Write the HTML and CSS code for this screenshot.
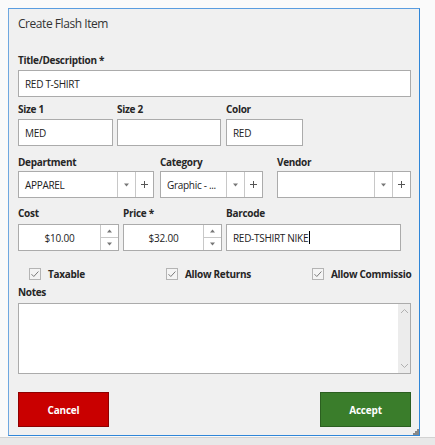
FILE: index.html
```html
<!DOCTYPE html>
<html>
<head>
<meta charset="utf-8">
<link rel="stylesheet" href="styles.css">
</head>
<body>
<div class="window">
  <div class="title">Create Flash Item</div>

  <div class="lbl mt-first">Title/Description *</div>
  <div class="input h27 mt3 full"><span class="val">RED T-SHIRT</span></div>

  <div class="row mt5">
    <div class="field w-size1"><div class="lbl">Size 1</div><div class="input h27 mt3"><span class="val">MED</span></div></div>
    <div class="field w-size2 ml4"><div class="lbl">Size 2</div><div class="input h27 mt3"></div></div>
    <div class="field w-color ml5"><div class="lbl">Color</div><div class="input h27 mt3"><span class="val">RED</span></div></div>
  </div>

  <div class="row mt9">
    <div class="field w-dept">
      <div class="lbl">Department</div>
      <div class="combo mt2">
        <span class="ctext">APPAREL</span>
        <span class="cbtn"><svg width="7" height="4" viewBox="0 0 7 4"><path d="M1 0.5h5L3.5 3.5z" fill="#777"/></svg></span>
        <span class="cbtn"><svg width="9" height="9" viewBox="0 0 9 9"><path d="M4.5 1v7M1 4.5h7" stroke="#555" stroke-width="1"/></svg></span>
      </div>
    </div>
    <div class="field w-cat ml6">
      <div class="lbl">Category</div>
      <div class="combo mt2">
        <span class="ctext">Graphic - ...</span>
        <span class="cbtn"><svg width="7" height="4" viewBox="0 0 7 4"><path d="M1 0.5h5L3.5 3.5z" fill="#777"/></svg></span>
        <span class="cbtn"><svg width="9" height="9" viewBox="0 0 9 9"><path d="M4.5 1v7M1 4.5h7" stroke="#555" stroke-width="1"/></svg></span>
      </div>
    </div>
    <div class="field w-vendor ml14">
      <div class="lbl">Vendor</div>
      <div class="combo mt2">
        <span class="ctext"></span>
        <span class="cbtn"><svg width="7" height="4" viewBox="0 0 7 4"><path d="M1 0.5h5L3.5 3.5z" fill="#777"/></svg></span>
        <span class="cbtn"><svg width="9" height="9" viewBox="0 0 9 9"><path d="M4.5 1v7M1 4.5h7" stroke="#555" stroke-width="1"/></svg></span>
      </div>
    </div>
  </div>

  <div class="row mt8">
    <div class="field w-cost">
      <div class="lbl">Cost</div>
      <div class="spin mt4">
        <span class="stext">$10.00</span>
        <span class="sbtns">
          <span class="sb"><svg width="7" height="4" viewBox="0 0 7 4"><path d="M1 3.5h5L3.5 0.5z" fill="#777"/></svg></span>
          <span class="sb sb2"><svg width="7" height="4" viewBox="0 0 7 4"><path d="M1 0.5h5L3.5 3.5z" fill="#777"/></svg></span>
        </span>
      </div>
    </div>
    <div class="field w-price ml4">
      <div class="lbl">Price *</div>
      <div class="spin mt4">
        <span class="stext">$32.00</span>
        <span class="sbtns">
          <span class="sb"><svg width="7" height="4" viewBox="0 0 7 4"><path d="M1 3.5h5L3.5 0.5z" fill="#777"/></svg></span>
          <span class="sb sb2"><svg width="7" height="4" viewBox="0 0 7 4"><path d="M1 0.5h5L3.5 3.5z" fill="#777"/></svg></span>
        </span>
      </div>
    </div>
    <div class="field w-barcode ml4">
      <div class="lbl">Barcode</div>
      <div class="input h27 mt4"><span class="val">RED-TSHIRT NIKE</span><span class="caret"></span></div>
    </div>
  </div>

  <div class="checks">
    <div class="chk c1"><svg class="box" width="12" height="12" viewBox="0 0 12 12"><rect x="0.5" y="0.5" width="11" height="11" fill="#f4f4f4" stroke="#b4b4b4"/><path d="M2.5 6.2l2.3 2.3 4.6-5" fill="none" stroke="#7a7a7a" stroke-width="1"/></svg><span class="clbl">Taxable</span></div>
    <div class="chk c2"><svg class="box" width="12" height="12" viewBox="0 0 12 12"><rect x="0.5" y="0.5" width="11" height="11" fill="#f4f4f4" stroke="#b4b4b4"/><path d="M2.5 6.2l2.3 2.3 4.6-5" fill="none" stroke="#7a7a7a" stroke-width="1"/></svg><span class="clbl">Allow Returns</span></div>
    <div class="chk c3"><svg class="box" width="12" height="12" viewBox="0 0 12 12"><rect x="0.5" y="0.5" width="11" height="11" fill="#f4f4f4" stroke="#b4b4b4"/><path d="M2.5 6.2l2.3 2.3 4.6-5" fill="none" stroke="#7a7a7a" stroke-width="1"/></svg><span class="clbl">Allow Commissio</span></div>
  </div>

  <div class="lbl mt4">Notes</div>
  <div class="notes mt4">
    <div class="narea"></div>
    <div class="scroll">
      <svg width="9" height="6" viewBox="0 0 9 6"><path d="M1 5l3.5-3.5L8 5" fill="none" stroke="#b0b0b0" stroke-width="1"/></svg>
      <svg width="9" height="6" viewBox="0 0 9 6"><path d="M1 1l3.5 3.5L8 1" fill="none" stroke="#b0b0b0" stroke-width="1"/></svg>
    </div>
  </div>

  <div class="buttons">
    <div class="btn cancel">Cancel</div>
    <div class="btn accept">Accept</div>
  </div>

  <svg class="grip" width="6" height="6" viewBox="0 0 6 6"><rect x="4" y="0" width="2" height="2" fill="#888"/><rect x="2" y="2" width="2" height="2" fill="#888"/><rect x="4" y="2" width="2" height="2" fill="#888"/><rect x="0" y="4" width="2" height="2" fill="#888"/><rect x="2" y="4" width="2" height="2" fill="#888"/><rect x="4" y="4" width="2" height="2" fill="#888"/></svg>
</div>
<div class="taskbar"></div>
</body>
</html>
```
FILE: styles.css
```css
html, body {
  margin: 0;
  padding: 0;
}
body {
  background: #fafafa;
  font-family: "Open Sans", "Noto Sans", sans-serif;
  color: #222;
  width: 435px;
  height: 445px;
  overflow: hidden;
}
.window {
  position: relative;
  box-sizing: border-box;
  margin: 8px 0 0 8px;
  width: 412px;
  height: 428px;
  border: 1px solid #2f86d8;
  border-top-color: #5a9de0;
  border-left-color: #6fa8e0;
  background: #f0f0f0;
  padding: 0 8px 0 9px;
}
.title {
  margin-top: 6px;
  height: 18px;
  line-height: 18px;
  font-size: 12px;
  letter-spacing: -0.45px;
  color: #333;
}
.lbl {
  height: 14px;
  line-height: 14px;
  font-size: 10px;
  font-weight: bold;
  letter-spacing: -0.3px;
  color: #262626;
  white-space: nowrap;
}
.mt-first { margin-top: 20px; }
.mt2 { margin-top: 2px; }
.mt3 { margin-top: 3px; }
.mt4 { margin-top: 4px; }
.mt5 { margin-top: 5px; }
.mt8 { margin-top: 8px; }
.mt9 { margin-top: 9px; }
.ml4 { margin-left: 4px; }
.ml5 { margin-left: 5px; }
.ml6 { margin-left: 6px; }
.ml14 { margin-left: 14px; }

.row { display: flex; }
.field { display: flex; flex-direction: column; }
.w-size1 { width: 95px; }
.w-size2 { width: 104px; }
.w-color { width: 77px; }
.w-dept { width: 136px; }
.w-cat { width: 103px; }
.w-vendor { width: 134px; }
.w-cost { width: 101px; }
.w-price { width: 99px; }
.w-barcode { width: 175px; }

.input {
  box-sizing: border-box;
  background: #fff;
  border: 1px solid #ababab;
  display: flex;
  align-items: center;
  padding-left: 6px;
  font-size: 10px;
  letter-spacing: -0.3px;
  color: #222;
}
.h27 { height: 27px; }
.full { width: 393px; }
.caret {
  display: inline-block;
  width: 1px;
  height: 13px;
  background: #000;
  margin-left: 1px;
}

.combo {
  box-sizing: border-box;
  height: 27px;
  background: #fff;
  border: 1px solid #ababab;
  display: flex;
}
.ctext {
  flex: 1;
  display: flex;
  align-items: center;
  padding-left: 6px;
  font-size: 10px;
  letter-spacing: -0.3px;
  color: #222;
  white-space: nowrap;
  overflow: hidden;
}
.cbtn {
  width: 17px;
  border-left: 1px solid #c8c8c8;
  background: #fff;
  display: flex;
  align-items: center;
  justify-content: center;
}

.spin {
  box-sizing: border-box;
  height: 27px;
  background: #fff;
  border: 1px solid #ababab;
  display: flex;
}
.stext {
  flex: 1;
  display: flex;
  align-items: center;
  justify-content: center;
  font-size: 10px;
  letter-spacing: -0.2px;
  color: #222;
}
.sbtns {
  width: 17px;
  border-left: 1px solid #c8c8c8;
  display: flex;
  flex-direction: column;
}
.sb {
  flex: 1;
  display: flex;
  align-items: center;
  justify-content: center;
}
.sb2 { border-top: 1px solid #c8c8c8; }

.checks {
  margin-top: 16px;
  height: 14px;
  display: flex;
  width: 393px;
}
.chk {
  display: flex;
  align-items: center;
  flex-shrink: 0;
  white-space: nowrap;
}
.chk .box { flex-shrink: 0; }
.c1 { margin-left: 11px; width: 137px; }
.c2 { width: 146px; }
.c3 { width: 99px; }
.clbl {
  margin-left: 7px;
  font-size: 10px;
  font-weight: bold;
  letter-spacing: -0.3px;
  color: #262626;
}

.notes {
  box-sizing: border-box;
  width: 393px;
  height: 71px;
  background: #fff;
  border: 1px solid #ababab;
  display: flex;
}
.narea { flex: 1; }
.scroll {
  width: 12px;
  background: #ececec;
  display: flex;
  flex-direction: column;
  justify-content: space-between;
  align-items: center;
  padding: 4px 0 4px;
}

.buttons {
  margin-top: 18px;
  display: flex;
  justify-content: space-between;
}
.btn {
  box-sizing: border-box;
  width: 91px;
  height: 35px;
  display: flex;
  align-items: center;
  justify-content: center;
  color: #fff;
  font-size: 10px;
  font-weight: bold;
  letter-spacing: -0.2px;
}
.cancel {
  background: #c90000;
  border: 1px solid #8e0000;
}
.accept {
  background: #3a7d2b;
  border: 1px solid #2b5f20;
}
.grip {
  position: absolute;
  right: 0;
  bottom: 0;
}
.taskbar {
  margin-top: 1px;
  height: 9px;
  border-top: 1px solid #d2d2d2;
  background: #e8e8e8;
}
```
